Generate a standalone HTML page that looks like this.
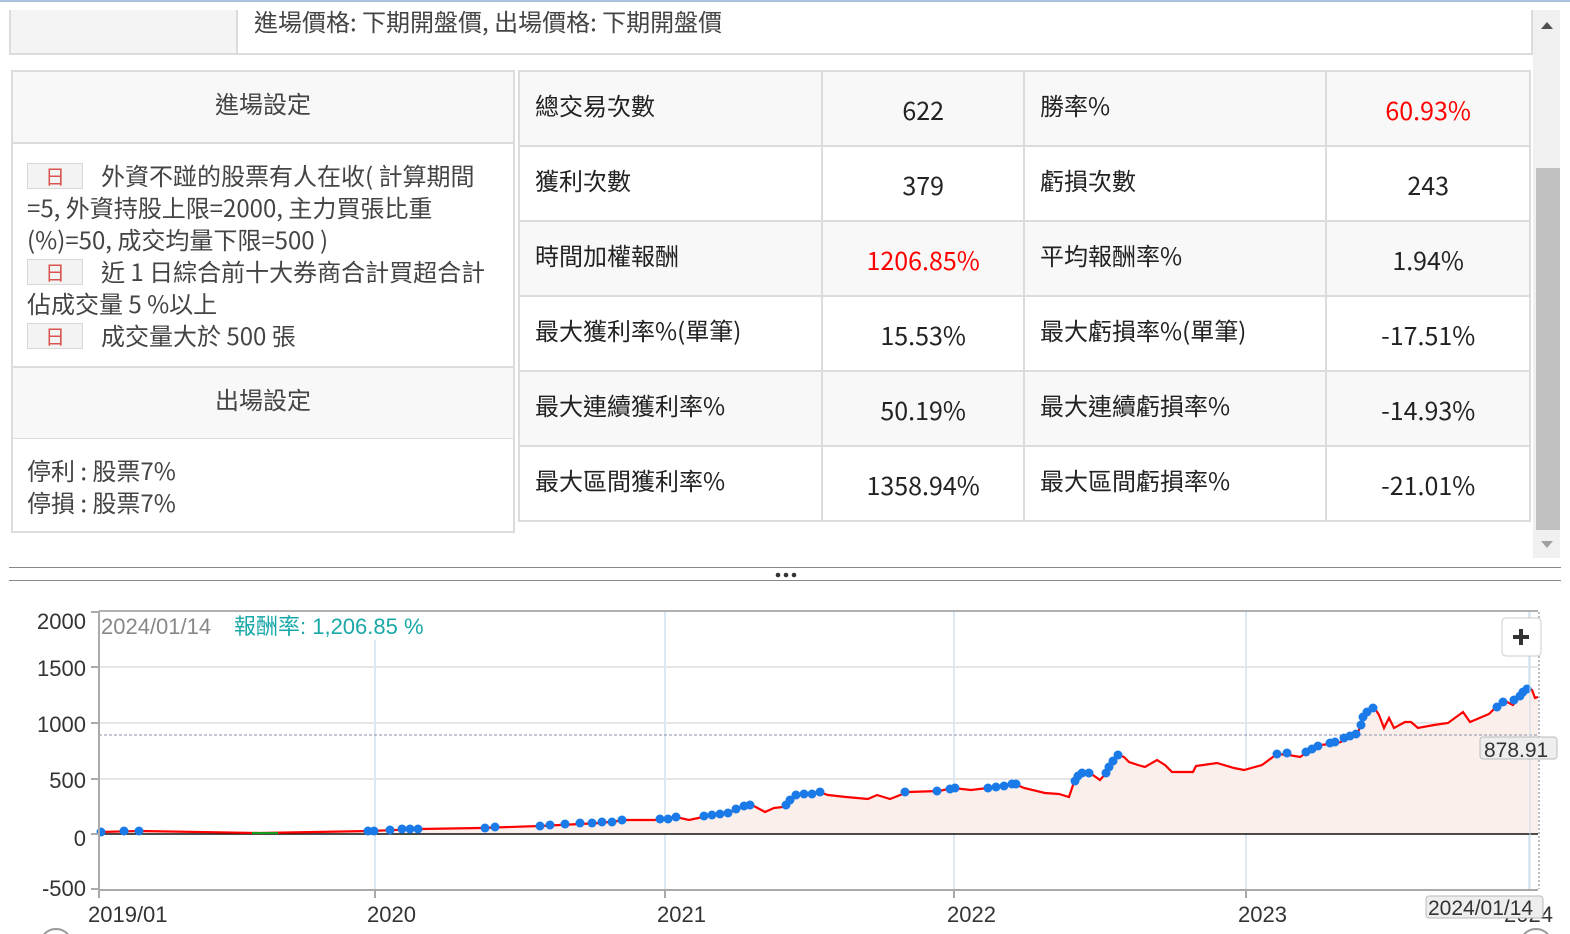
<!DOCTYPE html>
<html><head><meta charset="utf-8">
<style>
*{margin:0;padding:0;box-sizing:border-box}
body{width:1570px;height:934px;overflow:hidden;background:#fff;font-family:"Noto Sans CJK TC","Liberation Sans",sans-serif;position:relative;color:#333}
.abs{position:absolute}
.topline{left:0;top:0;width:1570px;height:2px;background:#a8c4dc}
.tag{display:inline-block;width:56px;height:26px;background:#f3f3f3;border:1px solid #d8d8d8;color:#d9534f;font-size:20px;text-align:center;line-height:24px;margin-right:18px;vertical-align:1px}
table{border-collapse:collapse}
td{border:2px solid #dcdcdc;height:75px;font-size:24px;color:#222}
td.l{padding-left:15px;padding-bottom:8px}
td.v{text-align:center;font-size:25px;padding-top:2px}
tr.g td{background:#f8f8f8}
.red{color:#f00!important}
</style></head><body>
<div class="abs topline"></div>
<div class="abs" style="left:9px;top:10px;width:1524px;height:45px;border:2px solid #dcdcdc;border-top:none"></div>
<div class="abs" style="left:11px;top:10px;width:227px;height:43px;background:#f4f4f4;border-right:2px solid #dcdcdc"></div>
<div class="abs" style="left:254px;top:3px;font-size:24px;color:#444;line-height:36px">進場價格: 下期開盤價, 出場價格: 下期開盤價</div>
<div class="abs" style="left:11px;top:70px;width:504px;height:463px;border:2px solid #dcdcdc"></div>
<div class="abs" style="left:13px;top:72px;width:500px;height:72px;background:#f8f8f8;border-bottom:2px solid #dcdcdc;text-align:center;line-height:62px;font-size:24px;color:#444">進場設定</div>
<div class="abs" style="left:27px;top:159px;white-space:nowrap;font-size:24px;line-height:32px;color:#444"><span class="tag">日</span>外資不踫的股票有人在收( 計算期間<br>=5, 外資持股上限=2000, 主力買張比重<br>(%)=50, 成交均量下限=500 )<br><span class="tag">日</span>近 1 日綜合前十大券商合計買超合計<br>佔成交量 5 %以上<br><span class="tag">日</span>成交量大於 500 張</div>
<div class="abs" style="left:13px;top:366px;width:500px;height:73px;background:#f8f8f8;border-top:2px solid #dcdcdc;border-bottom:1px solid #dcdcdc;text-align:center;line-height:62px;font-size:24px;color:#444">出場設定</div>
<div class="abs" style="left:27px;top:454px;font-size:24px;line-height:32px;color:#444">停利 : 股票7%<br>停損 : 股票7%</div>
<table class="abs" style="left:518px;top:70px;width:1013px">
<colgroup><col style="width:304px"><col style="width:202px"><col style="width:303px"><col style="width:204px"></colgroup>
<tr class="g"><td class="l">總交易次數</td><td class="v">622</td><td class="l">勝率%</td><td class="v red">60.93%</td></tr>
<tr><td class="l">獲利次數</td><td class="v">379</td><td class="l">虧損次數</td><td class="v">243</td></tr>
<tr class="g"><td class="l">時間加權報酬</td><td class="v red">1206.85%</td><td class="l">平均報酬率%</td><td class="v">1.94%</td></tr>
<tr><td class="l">最大獲利率%(單筆)</td><td class="v">15.53%</td><td class="l">最大虧損率%(單筆)</td><td class="v">-17.51%</td></tr>
<tr class="g"><td class="l">最大連續獲利率%</td><td class="v">50.19%</td><td class="l">最大連續虧損率%</td><td class="v">-14.93%</td></tr>
<tr><td class="l">最大區間獲利率%</td><td class="v">1358.94%</td><td class="l">最大區間虧損率%</td><td class="v">-21.01%</td></tr>
</table>
<div class="abs" style="left:1533px;top:10px;width:27px;height:548px;background:#f0f0f0"></div>
<div class="abs" style="left:1536px;top:168px;width:24px;height:362px;background:#c1c1c1"></div>
<div class="abs" style="left:1541px;top:22px;width:0;height:0;border-left:6px solid transparent;border-right:6px solid transparent;border-bottom:7px solid #505050"></div>
<div class="abs" style="left:1541px;top:541px;width:0;height:0;border-left:6px solid transparent;border-right:6px solid transparent;border-top:7px solid #a0a0a0"></div>
<div class="abs" style="left:9px;top:567px;width:1552px;height:1px;background:#888"></div>
<div class="abs" style="left:9px;top:580px;width:1552px;height:1px;background:#888"></div>
<svg class="abs" style="left:775px;top:571px" width="24" height="8"><circle cx="3" cy="4" r="2.3" fill="#333"/><circle cx="11" cy="4" r="2.3" fill="#333"/><circle cx="19" cy="4" r="2.3" fill="#333"/></svg>
<svg class="abs" style="left:0;top:590px" width="1570" height="344" viewBox="0 590 1570 344" font-family="Liberation Sans, sans-serif">
<defs>
<polyline id="ser" points="99,832 140,831 260,833 370,831 420,829 480,828 540,826 600,823 627,820 658,820 676,817 689,820 703,817 729,813 738,808 752,805 765,812 774,808 783,807 788,802 796,795 805,794 819,792 828,795 846,797 868,799 877,795 890,799 908,792 939,791 953,788 971,790 988,788 1000,787 1015,784 1024,788 1045,793 1059,794 1069,797 1074,782 1081,773 1090,773 1100,780 1107,772 1114,760 1119,755 1124,757 1129,762 1138,765 1145,767 1157,760 1165,765 1172,772 1193,772 1196,766 1217,763 1234,768 1244,770 1262,765 1277,754 1289,755 1300,757 1306,753 1320,745 1331,744 1341,742 1344,739 1358,733 1362,720 1368,710 1374,707 1379,715 1384,728 1389,718 1394,728 1405,722 1411,722 1418,728 1434,725 1448,723 1463,712 1470,722 1489,714 1496,707 1503,700 1513,705 1527,688 1532,690 1535,698 1538,697"/>
</defs>
<g stroke="#e6e6e6" stroke-width="2">
<line x1="99" y1="667" x2="1538" y2="667"/><line x1="99" y1="723" x2="1538" y2="723"/><line x1="99" y1="779" x2="1538" y2="779"/>
</g>
<g stroke="#dde9f2" stroke-width="2">
<line x1="375" y1="640" x2="375" y2="889"/><line x1="665" y1="612" x2="665" y2="889"/><line x1="954" y1="612" x2="954" y2="889"/><line x1="1246" y1="612" x2="1246" y2="889"/><line x1="1529" y1="612" x2="1529" y2="889"/>
</g>
<polygon fill="#fbefec" points="99,834 99,832 140,831 260,833 370,831 420,829 480,828 540,826 600,823 627,820 658,820 676,817 689,820 703,817 729,813 738,808 752,805 765,812 774,808 783,807 788,802 796,795 805,794 819,792 828,795 846,797 868,799 877,795 890,799 908,792 939,791 953,788 971,790 988,788 1000,787 1015,784 1024,788 1045,793 1059,794 1069,797 1074,782 1081,773 1090,773 1100,780 1107,772 1114,760 1119,755 1124,757 1129,762 1138,765 1145,767 1157,760 1165,765 1172,772 1193,772 1196,766 1217,763 1234,768 1244,770 1262,765 1277,754 1289,755 1300,757 1306,753 1320,745 1331,744 1341,742 1344,739 1358,733 1362,720 1368,710 1374,707 1379,715 1384,728 1389,718 1394,728 1405,722 1411,722 1418,728 1434,725 1448,723 1463,712 1470,722 1489,714 1496,707 1503,700 1513,705 1527,688 1532,690 1535,698 1538,697 1538,834"/>
<line x1="99" y1="735" x2="1538" y2="735" stroke="#8890a8" stroke-width="1" stroke-dasharray="3,2"/>
<line x1="99" y1="834" x2="1538" y2="834" stroke="#111" stroke-width="1.5"/>
<use href="#ser" fill="none" stroke="#f00" stroke-width="2.2"/>
<line x1="252" y1="833" x2="278" y2="833" stroke="#1a9a1a" stroke-width="2"/>
<g fill="#1a7ae8">
<circle cx="101" cy="832" r="4.5"/><circle cx="124" cy="831" r="4.5"/><circle cx="139" cy="831" r="4.5"/>
<circle cx="368" cy="831" r="4.5"/><circle cx="374" cy="831" r="4.5"/><circle cx="390" cy="830" r="4.5"/><circle cx="402" cy="829" r="4.5"/><circle cx="410" cy="829" r="4.5"/><circle cx="418" cy="829" r="4.5"/>
<circle cx="485" cy="828" r="4.5"/><circle cx="495" cy="827" r="4.5"/>
<circle cx="540" cy="826" r="4.5"/><circle cx="550" cy="825" r="4.5"/><circle cx="565" cy="824" r="4.5"/><circle cx="580" cy="823" r="4.5"/><circle cx="592" cy="823" r="4.5"/><circle cx="602" cy="822" r="4.5"/><circle cx="612" cy="822" r="4.5"/><circle cx="622" cy="820" r="4.5"/>
<circle cx="660" cy="819" r="4.5"/><circle cx="668" cy="819" r="4.5"/><circle cx="676" cy="817" r="4.5"/>
<circle cx="704" cy="816" r="4.5"/><circle cx="712" cy="815" r="4.5"/><circle cx="720" cy="814" r="4.5"/><circle cx="728" cy="813" r="4.5"/><circle cx="736" cy="809" r="4.5"/><circle cx="744" cy="806" r="4.5"/><circle cx="750" cy="805" r="4.5"/>
<circle cx="786" cy="805" r="4.5"/><circle cx="790" cy="800" r="4.5"/><circle cx="796" cy="795" r="4.5"/><circle cx="804" cy="794" r="4.5"/><circle cx="812" cy="794" r="4.5"/><circle cx="820" cy="792" r="4.5"/>
<circle cx="905" cy="792" r="4.5"/><circle cx="937" cy="791" r="4.5"/><circle cx="950" cy="789" r="4.5"/><circle cx="955" cy="788" r="4.5"/>
<circle cx="988" cy="788" r="4.5"/><circle cx="996" cy="787" r="4.5"/><circle cx="1004" cy="786" r="4.5"/><circle cx="1012" cy="784" r="4.5"/><circle cx="1016" cy="784" r="4.5"/>
<circle cx="1075" cy="781" r="4.5"/><circle cx="1078" cy="776" r="4.5"/><circle cx="1082" cy="773" r="4.5"/><circle cx="1089" cy="773" r="4.5"/><circle cx="1106" cy="773" r="4.5"/><circle cx="1109" cy="767" r="4.5"/><circle cx="1113" cy="761" r="4.5"/><circle cx="1118" cy="755" r="4.5"/>
<circle cx="1277" cy="754" r="4.5"/><circle cx="1287" cy="753" r="4.5"/><circle cx="1306" cy="752" r="4.5"/><circle cx="1312" cy="749" r="4.5"/><circle cx="1318" cy="746" r="4.5"/><circle cx="1330" cy="743" r="4.5"/><circle cx="1335" cy="742" r="4.5"/><circle cx="1344" cy="738" r="4.5"/><circle cx="1350" cy="736" r="4.5"/><circle cx="1356" cy="734" r="4.5"/><circle cx="1361" cy="725" r="4.5"/><circle cx="1363" cy="717" r="4.5"/><circle cx="1367" cy="712" r="4.5"/><circle cx="1373" cy="708" r="4.5"/>
<circle cx="1497" cy="707" r="4.5"/><circle cx="1503" cy="702" r="4.5"/><circle cx="1514" cy="700" r="4.5"/><circle cx="1520" cy="696" r="4.5"/><circle cx="1523" cy="692" r="4.5"/><circle cx="1527" cy="689" r="4.5"/>
</g>
<line x1="1530" y1="612" x2="1530" y2="889" stroke="#c8dceb" stroke-width="1"/>
<line x1="1539" y1="612" x2="1539" y2="889" stroke="#778" stroke-width="1" stroke-dasharray="2,2"/>
<line x1="99" y1="611" x2="1538" y2="611" stroke="#b0b0b0" stroke-width="2"/>
<line x1="99" y1="611" x2="99" y2="890" stroke="#aaa" stroke-width="2"/>
<line x1="99" y1="890" x2="1538" y2="890" stroke="#aaa" stroke-width="2"/>
<g stroke="#aaa" stroke-width="2">
<line x1="91" y1="612" x2="99" y2="612"/><line x1="91" y1="667" x2="99" y2="667"/><line x1="91" y1="723" x2="99" y2="723"/><line x1="91" y1="779" x2="99" y2="779"/><line x1="91" y1="834" x2="99" y2="834"/><line x1="91" y1="889" x2="99" y2="889"/>
<line x1="99" y1="890" x2="99" y2="898"/><line x1="375" y1="890" x2="375" y2="898"/><line x1="665" y1="890" x2="665" y2="898"/><line x1="954" y1="890" x2="954" y2="898"/><line x1="1246" y1="890" x2="1246" y2="898"/>
</g>
<g font-size="22" fill="#333" text-anchor="end">
<text x="86" y="629">2000</text><text x="86" y="676">1500</text><text x="86" y="732">1000</text><text x="86" y="788">500</text><text x="86" y="846">0</text><text x="86" y="896">-500</text>
</g>
<g font-size="22" fill="#333">
<text x="88" y="922">2019/01</text><text x="367" y="922">2020</text><text x="657" y="922">2021</text><text x="947" y="922">2022</text><text x="1238" y="922">2023</text><text x="1504" y="922">2024</text>
</g>
<text x="101" y="634" font-size="22" fill="#888">2024/01/14</text>
<text x="234" y="634" font-size="22" fill="#1aa8a8" font-family="Liberation Sans, Noto Sans CJK TC, sans-serif">報酬率: 1,206.85 %</text>
<rect x="1480" y="737" width="77" height="22" rx="3" fill="#eee" stroke="#bbb"/>
<text x="1484" y="757" font-size="21" fill="#333">878.91</text>
<rect x="1426" y="896" width="117" height="22" rx="3" fill="#eee" stroke="#bbb"/>
<text x="1428" y="915" font-size="21" fill="#333">2024/01/14</text>
<rect x="1502" y="618" width="39" height="38" rx="4" fill="#fff" stroke="#ccc"/>
<path d="M1513 637 H1529 M1521 629 V645" stroke="#333" stroke-width="4"/>
<circle cx="56" cy="945" r="16" fill="none" stroke="#999" stroke-width="2"/>
<circle cx="1536" cy="945" r="16" fill="none" stroke="#999" stroke-width="2"/>
</svg>
</body></html>
